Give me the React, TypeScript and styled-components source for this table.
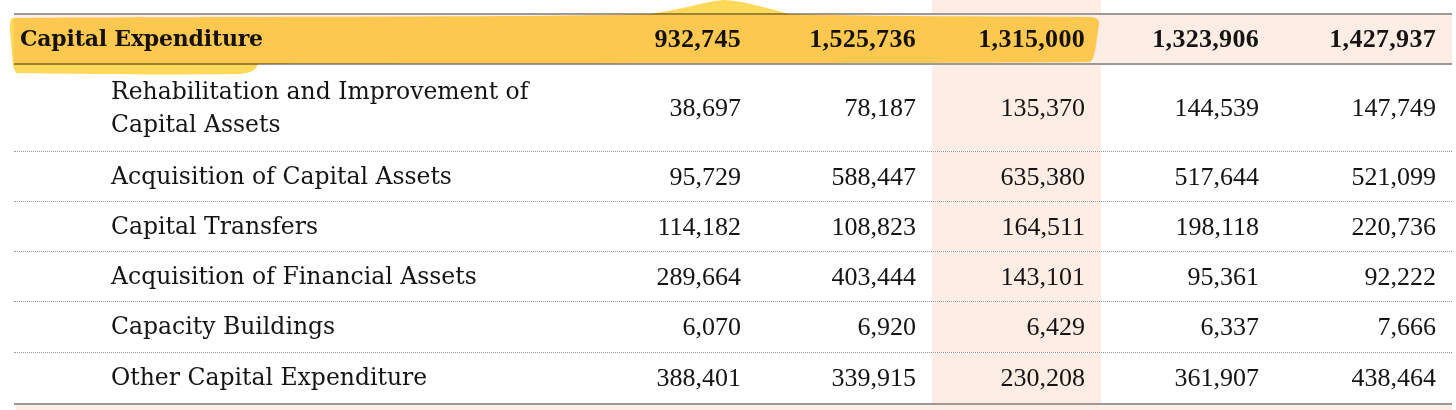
import React from "react";
import styled, { createGlobalStyle } from "styled-components";

const GlobalStyle = createGlobalStyle`
  html, body {
    margin: 0;
    padding: 0;
    background: #ffffff;
  }
  body {
    font-family: "Liberation Serif", "Times New Roman", serif;
    color: #161412;
  }
`;

const COLS = "569px 174px 175px 169px 174px 177px";
const PINK = "#fdede5";
const RULE = "#9c9a98";
const LABEL_FONT = `"DejaVu Serif", "Liberation Serif", serif`;

const Page = styled.div`
  position: relative;
  width: 1456px;
  height: 410px;
  overflow: hidden;
  padding-left: 14px;
  box-sizing: border-box;
`;

const Table = styled.div`
  width: 1438px;
  display: flex;
  flex-direction: column;
`;

const GhostRow = styled.div`
  display: grid;
  grid-template-columns: ${COLS};
  height: 13px;
`;

const GhostCell = styled.div<{ $hl?: boolean }>`
  background: ${(p) => (p.$hl ? PINK : "transparent")};
`;

const HeaderRow = styled.div`
  display: grid;
  grid-template-columns: ${COLS};
  height: 48px;
  background: ${PINK};
  border-top: 2px solid ${RULE};
  border-bottom: 2px solid ${RULE};
  font-weight: 700;
`;

const BodyRow = styled.div<{ $h: number; $last?: boolean }>`
  display: grid;
  grid-template-columns: ${COLS};
  height: ${(p) => p.$h}px;
  border-bottom: ${(p) => (p.$last ? `2px solid ${RULE}` : `1px dotted ${RULE}`)};
`;

const FooterRow = styled.div`
  height: 40px;
  margin-left: 2px;
  background: ${PINK};
`;

const LabelCell = styled.div<{ $indent: number; $bold?: boolean }>`
  display: flex;
  align-items: center;
  padding-left: ${(p) => p.$indent}px;
  font-family: ${LABEL_FONT};
  font-size: ${(p) => (p.$bold ? "22px" : "23.5px")};
  letter-spacing: ${(p) => (p.$bold ? "-0.2px" : "0")};
  line-height: 33.5px;
`;

const LabelText = styled.span`
  max-width: 450px;
`;

const NumCell = styled.div<{ $hl?: boolean; $bold?: boolean }>`
  display: flex;
  align-items: center;
  justify-content: flex-end;
  padding-right: 16px;
  background: ${(p) => (p.$hl ? PINK : "transparent")};
  font-size: 26px;
  letter-spacing: ${(p) => (p.$bold ? "0.3px" : "0")};
  white-space: nowrap;
`;

const Highlighter = styled.svg`
  position: absolute;
  left: 0;
  top: 0;
  width: 1456px;
  height: 410px;
  pointer-events: none;
  mix-blend-mode: multiply;
`;

type Line = { label: string; values: string[]; h: number };

const header = {
  label: "Capital Expenditure",
  values: ["932,745", "1,525,736", "1,315,000", "1,323,906", "1,427,937"],
};

const lines: Line[] = [
  {
    label: "Rehabilitation and Improvement of Capital Assets",
    values: ["38,697", "78,187", "135,370", "144,539", "147,749"],
    h: 86,
  },
  {
    label: "Acquisition of Capital Assets",
    values: ["95,729", "588,447", "635,380", "517,644", "521,099"],
    h: 49,
  },
  {
    label: "Capital Transfers",
    values: ["114,182", "108,823", "164,511", "198,118", "220,736"],
    h: 49,
  },
  {
    label: "Acquisition of Financial Assets",
    values: ["289,664", "403,444", "143,101", "95,361", "92,222"],
    h: 49,
  },
  {
    label: "Capacity Buildings",
    values: ["6,070", "6,920", "6,429", "6,337", "7,666"],
    h: 50,
  },
  {
    label: "Other Capital Expenditure",
    values: ["388,401", "339,915", "230,208", "361,907", "438,464"],
    h: 50,
  },
];

export default function App() {
  return (
    <>
      <GlobalStyle />
      <Page>
        <Table>
          <GhostRow>
            {[0, 1, 2, 3, 4, 5].map((i) => (
              <GhostCell key={i} $hl={i === 3} />
            ))}
          </GhostRow>
          <HeaderRow>
            <LabelCell $indent={6} $bold>
              {header.label}
            </LabelCell>
            {header.values.map((v, i) => (
              <NumCell key={i} $bold>
                {v}
              </NumCell>
            ))}
          </HeaderRow>
          {lines.map((row, r) => (
            <BodyRow key={row.label} $h={row.h} $last={r === lines.length - 1}>
              <LabelCell $indent={97}>
                <LabelText>{row.label}</LabelText>
              </LabelCell>
              {row.values.map((v, i) => (
                <NumCell key={i} $hl={i === 2}>
                  {v}
                </NumCell>
              ))}
            </BodyRow>
          ))}
          <FooterRow />
        </Table>
        <Highlighter viewBox="0 0 1456 410">
          <path
            fill="#fed859"
            d="M 12 18 C 200 16, 500 18, 650 14 C 690 8, 705 1, 725 0 C 745 1, 765 8, 790 14 C 900 17, 1000 16, 1092 17 Q 1100 18, 1099 24 L 1096 45 Q 1094 60, 1090 62 C 900 64, 500 63, 258 64 C 256 70, 250 73, 240 74 C 160 75, 60 74, 16 73 L 13 66 L 10 30 Q 10 19, 12 18 Z"
          />
        </Highlighter>
      </Page>
    </>
  );
}
